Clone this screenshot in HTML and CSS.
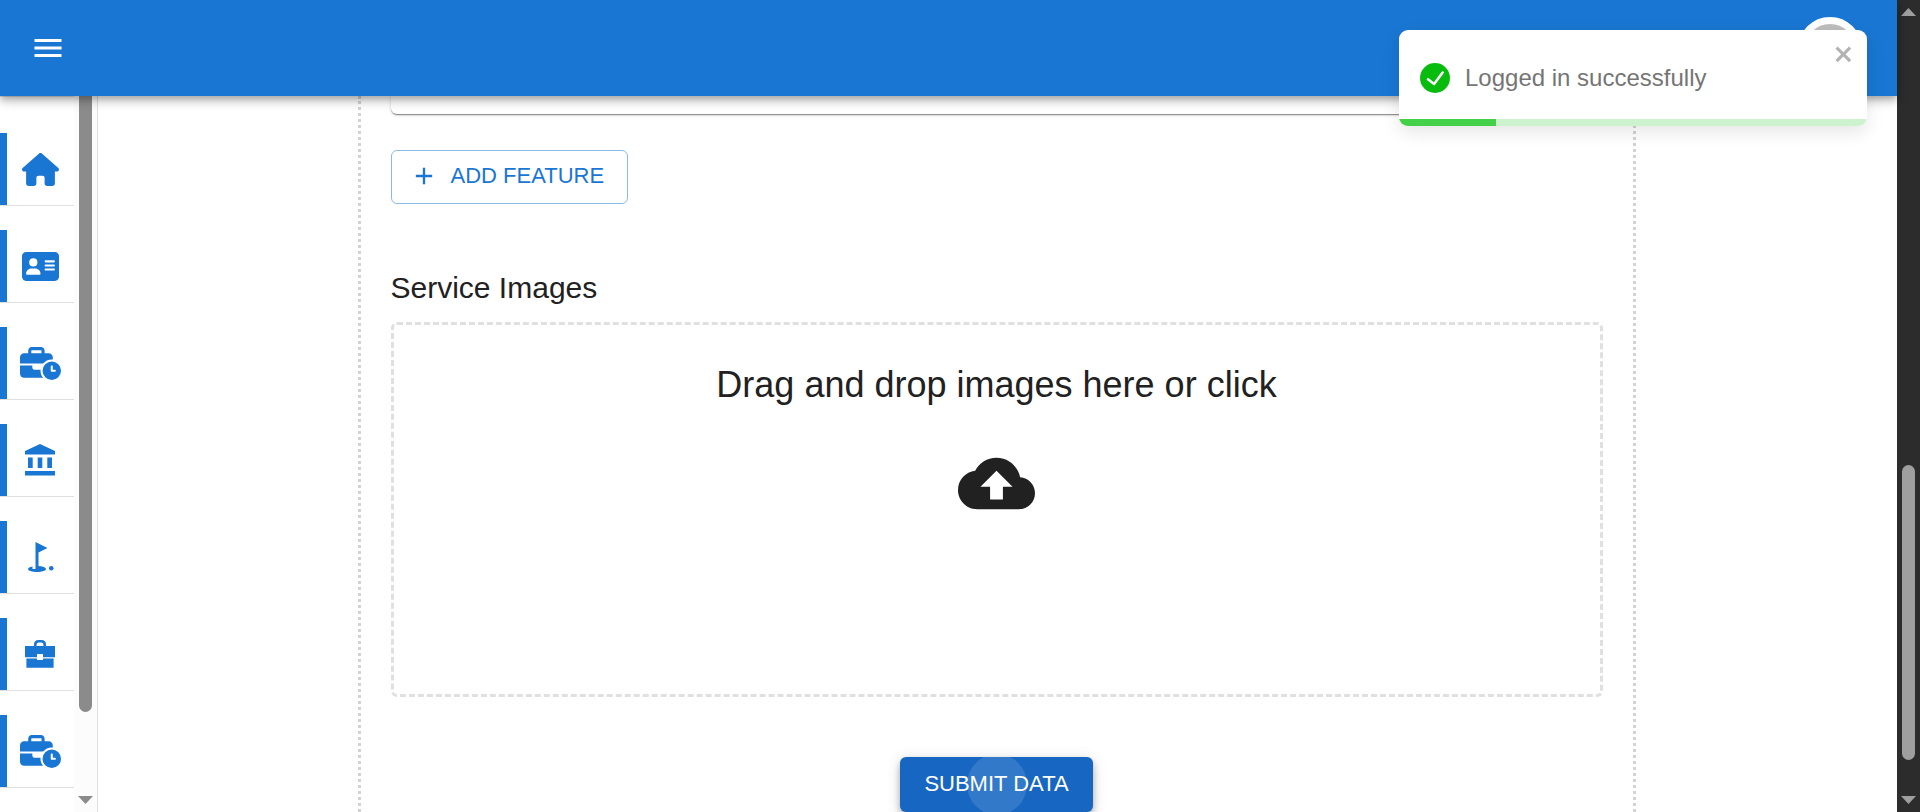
FILE: index.html
```
<!DOCTYPE html>
<html lang="en">
<head>
<meta charset="utf-8">
<title>Service data</title>
<link rel="stylesheet" href="styles.css">
</head>
<body>
<svg class="sprite" aria-hidden="true">
  <symbol id="business-time" viewBox="0 0 640 512">
    <path d="M184 48H328c4.400 0 8 3.600 8 8V96H176V56c0-4.400 3.600-8 8-8zm-56 8V96H64C28.700 96 0 124.700 0 160v96H192 352h8.200c32.300-39.100 81.100-64 135.800-64c5.400 0 10.700 .2 16 .7V160c0-35.300-28.700-64-64-64H384V56c0-30.900-25.100-56-56-56H184c-30.900 0-56 25.100-56 56zM320 352H224c-17.700 0-32-14.300-32-32V288H0V416c0 35.300 28.700 64 64 64H360.200C335.100 449.600 320 410.500 320 368c0-5.400 .2-10.700 .7-16l-.7 0zm320 16a144 144 0 1 0 -288 0 144 144 0 1 0 288 0zM496 288c8.800 0 16 7.200 16 16v48h32c8.800 0 16 7.200 16 16s-7.200 16-16 16H496c-8.800 0-16-7.200-16-16V304c0-8.800 7.200-16 16-16z"/>
  </symbol>
</svg>
<div class="app">
  <header class="topbar">
    <button class="menu" type="button" aria-label="Open menu">
      <svg viewBox="0 0 24 24"><path d="M3 18h18v-2H3v2zm0-5h18v-2H3v2zm0-7v2h18V6H3z"/></svg>
    </button>
    <button class="avatar" type="button" aria-label="Account"></button>
  </header>
  <div class="body">
    <aside class="sidebar">
      <nav class="nav">
        <a href="#home" aria-label="Home"><svg class="icon-md" viewBox="0 0 576 512"><path d="M575.8 255.5c0 18-15 32.1-32 32.1h-32l.7 160.2c0 2.700-.2 5.400-.5 8.100V472c0 22.100-17.900 40-40 40H456c-1.100 0-2.200 0-3.300-.1c-1.400 .1-2.800 .1-4.200 .1H416 392c-22.100 0-40-17.900-40-40V448 384c0-17.700-14.300-32-32-32H256c-17.700 0-32 14.300-32 32v64 24c0 22.100-17.900 40-40 40H160 128.100c-1.500 0-3-.1-4.500-.2c-1.200 .1-2.400 .2-3.600 .2H104c-22.100 0-40-17.900-40-40V360c0-.9 0-1.900 .1-2.800V287.600H32c-18 0-32-14-32-32.100c0-9 3-17 10-24L266.400 8c7-7 15-8 22-8s15 2 21 7L564.800 231.500c8 7 12 15 11 24z"/></svg></a>
        <a href="#contacts" aria-label="Contacts"><svg class="icon-md" viewBox="0 0 576 512"><path d="M64 32C28.700 32 0 60.700 0 96V416c0 35.300 28.700 64 64 64H512c35.300 0 64-28.700 64-64V96c0-35.300-28.700-64-64-64H64zm80 256h64c44.200 0 80 35.800 80 80c0 8.800-7.200 16-16 16H80c-8.800 0-16-7.200-16-16c0-44.200 35.800-80 80-80zm-32-96a64 64 0 1 1 128 0 64 64 0 1 1 -128 0zm256-32H496c8.800 0 16 7.200 16 16s-7.200 16-16 16H368c-8.800 0-16-7.200-16-16s7.200-16 16-16zm0 64H496c8.800 0 16 7.200 16 16s-7.200 16-16 16H368c-8.800 0-16-7.200-16-16s7.200-16 16-16zm0 64H496c8.800 0 16 7.200 16 16s-7.200 16-16 16H368c-8.800 0-16-7.200-16-16s7.200-16 16-16z"/></svg></a>
        <a href="#schedule" aria-label="Schedule"><svg class="icon-lg"><use href="#business-time"/></svg></a>
        <a href="#bank" aria-label="Bank"><svg class="icon-sm" viewBox="0 0 36 36"><path d="M18 2 33 9V12.500H3V9zM6 15.500h4.700V26H6zM15.700 15.500h4.600V26h-4.600zM25.300 15.500H30V26h-4.700zM3 29h30v4.500H3z"/></svg></a>
        <a href="#goals" aria-label="Goals"><svg class="icon-sm" viewBox="0 0 24 24"><circle cx="19.5" cy="19.5" r="1.5"/><path d="M17 5.920 9 2v18H7v-1.730c-1.790.35-3 .99-3 1.730 0 1.100 2.690 2 6 2s6-.9 6-2c0-.99-2.160-1.810-5-1.970V8.980l6-3.060z"/></svg></a>
        <a href="#services" aria-label="Services"><svg class="icon-sm" viewBox="0 0 36 36"><path fill-rule="evenodd" d="M12 10V8.500Q12 4 16.500 4h3Q24 4 24 8.500V10h9v11.300H21V18h-6v3.300H3V10zM14.500 10h7V9Q21.500 6.500 19.500 6.500h-3Q14.500 6.500 14.500 9zM4.400 22.500H15V24h6v-1.500h10.600v9.300H4.400z"/></svg></a>
        <a href="#hours" aria-label="Working hours"><svg class="icon-lg"><use href="#business-time"/></svg></a>
      </nav>
      <div class="scroll scroll-light" aria-hidden="true">
        <div class="track"><div class="thumb"></div></div>
        <svg class="arrow" viewBox="0 0 15 8"><path d="M0 0h15L7.500 8z"/></svg>
      </div>
    </aside>
    <main class="main">
      <form class="form">
        <div class="card"></div>
        <button class="add" type="button">
          <svg viewBox="0 0 24 24"><path d="M19 13h-6v6h-2v-6H5v-2h6V5h2v6h6z"/></svg>
          <span>ADD FEATURE</span>
        </button>
        <h2 class="heading">Service Images</h2>
        <label class="dropzone">
          <input class="file" type="file" multiple>
          <span>Drag and drop images here or click</span>
          <svg viewBox="0 0 24 24"><path d="M19.350 10.040C18.670 6.590 15.640 4 12 4 9.110 4 6.600 5.640 5.350 8.040 2.340 8.360 0 10.910 0 14c0 3.310 2.690 6 6 6h13c2.760 0 5-2.240 5-5 0-2.640-2.050-4.780-4.650-4.960zM14 13v4h-4v-4H7l5-5 5 5h-3z"/></svg>
        </label>
        <button class="submit" type="button"><span class="ripple"></span><span class="submit-text">SUBMIT DATA</span></button>
      </form>
    </main>
  </div>
  <div class="toast" role="alert">
    <div class="toast-body">
      <svg class="check" viewBox="0 0 24 24"><path d="M12 0a12 12 0 1 0 12 12A12.014 12.014 0 0 0 12 0zm6.927 8.200-6.845 9.289a1.011 1.011 0 0 1-1.430.188l-4.888-3.908a1 1 0 1 1 1.250-1.562l4.076 3.261 6.227-8.451a1 1 0 1 1 1.610 1.183z"/></svg>
      <span>Logged in successfully</span>
      <button class="close" type="button" aria-label="Close"><svg viewBox="0 0 14 16"><path fill-rule="evenodd" d="M7.710 8.230l3.750 3.750-1.480 1.480-3.750-3.750-3.750 3.750L1 11.980l3.750-3.750L1 4.480 2.480 3l3.750 3.750L9.980 3l1.480 1.480-3.750 3.750z"/></svg></button>
    </div>
    <div class="progress"><div class="progress-value" style="width: 20.7%"></div></div>
  </div>
</div>
<div class="scroll scroll-dark" aria-hidden="true">
  <svg class="arrow" viewBox="0 0 15 8"><path d="M0 8 7.500 0 15 8z"/></svg>
  <div class="track"><div class="thumb"></div></div>
  <svg class="arrow" viewBox="0 0 15 8"><path d="M0 0h15L7.500 8z"/></svg>
</div>
</body>
</html>
```
FILE: styles.css
```
* { box-sizing: border-box; }
body {
  margin: 0;
  height: 100vh;
  display: flex;
  overflow: hidden;
  background: #fff;
  color: #212121;
  font-family: "Liberation Sans", Arial, sans-serif;
}
button { font: inherit; cursor: pointer; }
svg { display: block; fill: currentColor; }
.sprite { position: absolute; width: 0; height: 0; }

.app { position: relative; flex: 1; min-width: 0; display: flex; flex-direction: column; }
.topbar {
  position: relative;
  z-index: 1;
  flex: none;
  height: 96px;
  padding: 2px 35px 0 30px;
  display: flex;
  align-items: center;
  justify-content: space-between;
  background: #1976d2;
  color: #fff;
  box-shadow: 0 3px 6px -1px rgba(0, 0, 0, .2), 0 6px 8px rgba(0, 0, 0, .14), 0 2px 15px rgba(0, 0, 0, .12);
}
.menu { padding: 0 0 2px; border: 0; background: none; color: inherit; }
.menu svg { width: 36px; height: 36px; }
.avatar { width: 64px; height: 64px; border: 7px solid #fff; border-radius: 50%; background: #bdbdbd; }

.body { flex: 1; min-height: 0; display: flex; }
.sidebar { flex: none; display: flex; overflow: hidden; border-right: 1px solid #e0e0e0; }
.nav {
  width: 74px;
  padding-top: 36px;
  display: flex;
  flex-direction: column;
  gap: 24px;
  border-top: 1px solid #e0e0e0;
}
.nav a {
  flex: none;
  height: 73px;
  display: flex;
  align-items: center;
  justify-content: center;
  border-bottom: 1px solid #e0e0e0;
  box-shadow: inset 7px 0 #1976d2;
  padding-left: 6px;
  color: #1976d2;
}
.icon-sm { width: 36px; height: 36px; }
.icon-md { width: 37px; height: 33px; }
.icon-lg { width: 41px; height: 33px; }

.scroll {
  flex: none;
  width: 23px;
  padding: 8px 0;
  display: flex;
  flex-direction: column;
  align-items: center;
  gap: 7px;
}
.arrow { width: 15px; height: 8px; }
.track { flex: 1; display: flex; flex-direction: column; }
.thumb { width: 13px; border-radius: 7px; background: currentColor; }
.scroll-light { background: #fcfcfc; color: #8b8b8b; padding-top: 0; gap: 0; }
.scroll-light .thumb { height: 88%; border-radius: 0 0 7px 7px; }
.scroll-dark { background: #2c2c2c; color: #9f9f9f; }
.scroll-dark .track { padding-bottom: 29px; justify-content: flex-end; }
.scroll-dark .thumb { height: 40%; }

.main { flex: 1; min-width: 0; overflow: hidden; padding: 0 26px 0 24px; }
.form {
  max-width: 1278px;
  margin: 0 auto;
  padding: 0 30px 48px;
  display: flex;
  flex-direction: column;
  align-items: flex-start;
  border: 3px dotted #d3d3d3;
  border-width: 0 3px;
}
.card {
  width: 100%;
  height: 18px;
  border-radius: 0 0 6px 6px;
  box-shadow: 0 3px 2px -2px rgba(0, 0, 0, .2), 0 1px 1px rgba(0, 0, 0, .3), 0 1px 4px rgba(0, 0, 0, .12);
}
.add {
  height: 54px;
  margin-top: 36px;
  padding: 0 23px 2px 18px;
  display: flex;
  align-items: center;
  gap: 13px;
  border: 1px solid #8cbae8;
  border-radius: 6px;
  background: #fff;
  color: #1976d2;
  font-size: 22px;
}
.add svg { width: 28px; height: 28px; }
.heading { margin: 60px 0 10px; font-size: 30px; line-height: 48px; font-weight: 400; }
.dropzone {
  width: 100%;
  min-height: 375px;
  padding: 36px 24px;
  display: flex;
  flex-direction: column;
  align-items: center;
  gap: 36px;
  border: 3px dashed #e0e0e0;
  border-radius: 6px;
  font-size: 36px;
  line-height: 48px;
  cursor: pointer;
}
.dropzone svg { width: 77px; height: 77px; }
.file { position: absolute; width: 1px; height: 1px; opacity: 0; }
.submit {
  position: relative;
  overflow: hidden;
  align-self: center;
  height: 55px;
  margin-top: 60px;
  padding: 0 24px 2px;
  border: 0;
  border-radius: 6px;
  background: #1767c2;
  color: #fff;
  font-size: 22px;
  box-shadow: 0 3px 6px -1px rgba(0, 0, 0, .2), 0 6px 8px rgba(0, 0, 0, .14), 0 2px 15px rgba(0, 0, 0, .12);
}
.submit-text { position: relative; }
.ripple {
  position: absolute;
  inset: -3px 0;
  width: 60px;
  margin: auto;
  border-radius: 50%;
  background: rgba(255, 255, 255, .12);
}

.toast {
  position: absolute;
  z-index: 2;
  top: 30px;
  right: 30px;
  width: 468px;
  overflow: hidden;
  border-radius: 9px;
  background: #fff;
  color: #757575;
  font-size: 24px;
  box-shadow: 0 6px 18px rgba(0, 0, 0, .1);
}
.toast-body { height: 89px; padding: 7px 12px 0 21px; display: flex; align-items: center; gap: 15px; }
.check { width: 30px; height: 30px; color: #07bc0c; }
.close { align-self: flex-start; margin-left: auto; padding: 5px 0 0; border: 0; background: none; color: #b2b2b2; }
.close svg { width: 21px; height: 24px; }
.progress { height: 7px; background: #cdf2ce; }
.progress-value { height: 100%; background: #45d049; }
```
